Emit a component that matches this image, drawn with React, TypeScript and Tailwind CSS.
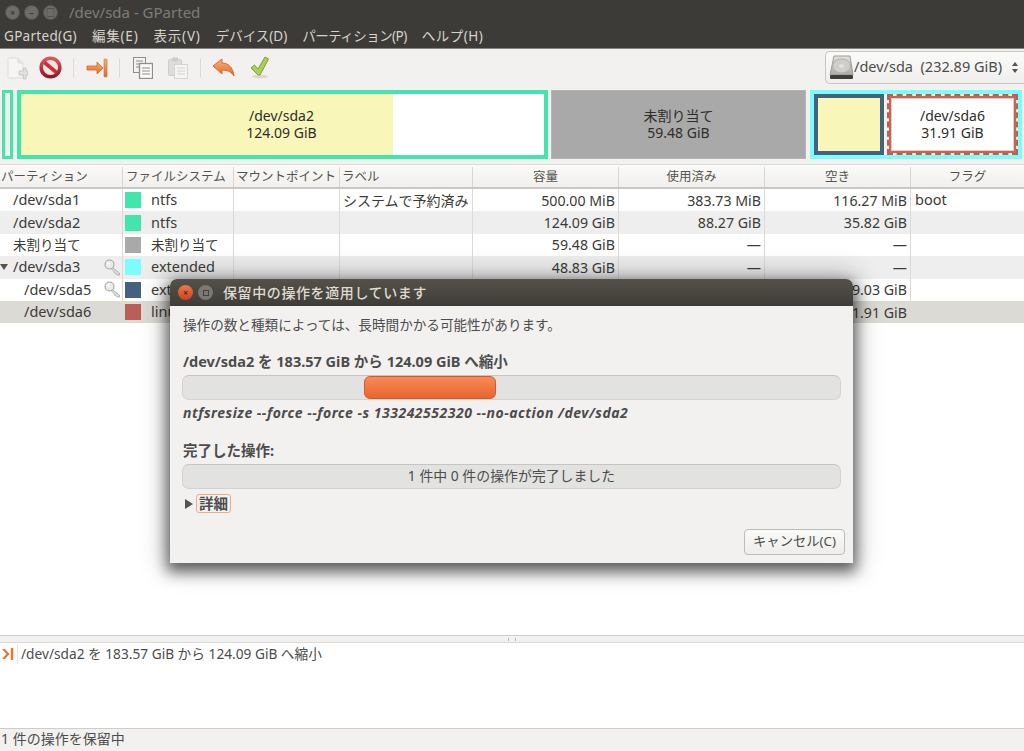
import React from 'react';

const font = "font-['Noto_Sans','Noto_Sans_CJK_JP',sans-serif]";

const columns = 'grid grid-cols-[123px_111px_106px_133px_146px_146px_146px_113px]';

const rows = [
  { name: '/dev/sda1', indent: 'pl-[13px]', color: 'bg-[#42e5ac]', fs: 'ntfs', label: 'システムで予約済み', size: '500.00 MiB', used: '383.73 MiB', free: '116.27 MiB', flag: 'boot', bg: 'bg-white' },
  { name: '/dev/sda2', indent: 'pl-[13px]', color: 'bg-[#42e5ac]', fs: 'ntfs', label: '', size: '124.09 GiB', used: '88.27 GiB', free: '35.82 GiB', flag: '', bg: 'bg-[#eeeeee]' },
  { name: '未割り当て', indent: 'pl-[13px] text-[13.5px]', color: 'bg-[#a9a9a9]', fs: '未割り当て', label: '', size: '59.48 GiB', used: '—', free: '—', flag: '', bg: 'bg-white', cjk: true },
  { name: '/dev/sda3', indent: 'pl-[13px]', color: 'bg-[#7dfcfe]', fs: 'extended', label: '', size: '48.83 GiB', used: '—', free: '—', flag: '', bg: 'bg-[#eeeeee]', arrow: true, key: true },
  { name: '/dev/sda5', indent: 'pl-[24px]', color: 'bg-[#44617f]', fs: 'ext4', label: '', size: '16.92 GiB', used: '7.89 GiB', free: '9.03 GiB', flag: '', bg: 'bg-white', key: true },
  { name: '/dev/sda6', indent: 'pl-[24px]', color: 'bg-[#ba5f57]', fs: 'linux-swap', label: '', size: '31.91 GiB', used: '—', free: '31.91 GiB', flag: '', bg: 'bg-[#dcdad5]' },
];

function WinButton({ glyph }: { glyph: string }) {
  return (
    <div className="w-[15px] h-[15px] rounded-full bg-[#6e6c66] border border-[#55534e] flex items-center justify-center text-[9px] leading-none text-[#3c3b37] font-bold">
      {glyph}
    </div>
  );
}

function NewIcon() {
  return (
    <svg width="21" height="23" viewBox="0 0 21 23">
      <path d="M1 1h10l5 5v15H1z" fill="#f6f5f3" stroke="#dddbd7" />
      <path d="M11 1v5h5" fill="#e8e6e2" stroke="#dddbd7" />
      <path d="M14 14h2.500v-3h2.500v3h1.500v4H19v4h-2.500v-4H12v-4z" fill="#e2e0dc" stroke="#cbc9c5" />
    </svg>
  );
}

function StopIcon() {
  return (
    <svg width="23" height="23" viewBox="0 0 23 23">
      <defs>
        <linearGradient id="stopRing" x1="0" y1="0" x2="0" y2="1">
          <stop offset="0" stopColor="#e0565c" />
          <stop offset="1" stopColor="#8e1a24" />
        </linearGradient>
      </defs>
      <circle cx="11.500" cy="11.500" r="9.300" fill="#f3e3e3" stroke="url(#stopRing)" strokeWidth="3.600" />
      <path d="M5.500 6.500l12 10" stroke="#c9323c" strokeWidth="3.600" />
    </svg>
  );
}

function ApplyArrow() {
  return (
    <svg width="22" height="20" viewBox="0 0 22 20">
      <defs>
        <linearGradient id="applyFill" x1="0" y1="0" x2="0" y2="1">
          <stop offset="0" stopColor="#f8b070" />
          <stop offset="1" stopColor="#e26a28" />
        </linearGradient>
      </defs>
      <path d="M1 8h10V4l6 6-6 6v-4H1z" fill="url(#applyFill)" stroke="#d9642a" strokeWidth="0.800" strokeLinejoin="round" />
      <rect x="18" y="1" width="3" height="18" rx="1" fill="url(#applyFill)" stroke="#d9642a" strokeWidth="0.600" />
    </svg>
  );
}

function CopyIcon() {
  const line = '#8f8e8a';
  return (
    <svg width="20" height="22" viewBox="0 0 20 22">
      <rect x="0.500" y="0.500" width="12" height="15" fill="#f3f2f0" stroke={line} />
      <path d="M3 4h7M3 7h7M3 10h7" stroke={line} />
      <rect x="6.500" y="6.500" width="13" height="15" fill="#fafaf9" stroke={line} strokeWidth="1.300" />
      <path d="M9 11h8M9 14h8M9 17h8" stroke={line} />
    </svg>
  );
}

function PasteIcon() {
  return (
    <svg width="20" height="22" viewBox="0 0 20 22">
      <rect x="0.500" y="2.500" width="13" height="16" rx="1" fill="#dedcd8" stroke="#cfcdc9" />
      <rect x="4" y="0.500" width="6" height="4" fill="#cfcdc9" />
      <rect x="6.500" y="7.500" width="13" height="14" fill="#f5f4f2" stroke="#d6d4d0" />
      <path d="M9 11h8M9 14h8M9 17h8" stroke="#d6d4d0" />
    </svg>
  );
}

function UndoIcon() {
  return (
    <svg width="23" height="19" viewBox="0 0 23 19">
      <defs>
        <linearGradient id="undoFill" x1="0" y1="0" x2="0" y2="1">
          <stop offset="0" stopColor="#f9b273" />
          <stop offset="1" stopColor="#e2692a" />
        </linearGradient>
      </defs>
      <path d="M1 8l9-7v4c6 0 11 4 12 13-3-4-6-6-12-6v4z" fill="url(#undoFill)" stroke="#d2602a" strokeWidth="0.900" strokeLinejoin="round" />
    </svg>
  );
}

function CheckIcon() {
  return (
    <svg width="20" height="23" viewBox="0 0 20 23">
      <ellipse cx="10" cy="20.500" rx="8" ry="1.800" fill="#d9d8d4" />
      <path d="M1 12l3.500-3 3.500 4L15 1l3.500 2-8.500 16H8z" fill="#a9cf54" stroke="#7fa034" strokeLinejoin="round" />
    </svg>
  );
}

function KeyIcon() {
  return (
    <svg width="17" height="17" viewBox="0 0 17 17" className="shrink-0 mr-[1px]">
      <path d="M8.500 8.500l7 5.500v2h-2.500l-1-1.500-1.500-.5-.5-1.500-3-3z" fill="#dfdedb" stroke="#a5a4a0" strokeWidth="0.800" />
      <circle cx="5.500" cy="5.500" r="4.500" fill="#ecebe9" stroke="#a5a4a0" strokeWidth="1.100" />
      <circle cx="4.500" cy="4.500" r="1.300" fill="#fafaf9" />
    </svg>
  );
}

function DiskIcon() {
  return (
    <svg width="25" height="25" viewBox="0 0 25 25" className="shrink-0">
      <defs>
        <linearGradient id="diskFace" x1="0" y1="0" x2="0" y2="1">
          <stop offset="0" stopColor="#e3e2df" />
          <stop offset="1" stopColor="#aaa9a5" />
        </linearGradient>
      </defs>
      <path d="M5 1h16l3 19H1z" fill="url(#diskFace)" stroke="#9e9d99" />
      <ellipse cx="12.500" cy="11" rx="9" ry="7" fill="#cfcecb" stroke="#b0afab" />
      <ellipse cx="12.500" cy="11" rx="2.500" ry="1.800" fill="#e6e5e2" />
      <rect x="1" y="20" width="23" height="4" rx="1" fill="#3f3e3b" />
    </svg>
  );
}

function TableRow({ row }: { row: (typeof rows)[number] }) {
  const cell = 'border-r border-[#dcdad7] h-full flex items-center overflow-hidden whitespace-nowrap';
  return (
    <div className={`${columns} h-[22.4px] text-[14.5px] text-[#3c3b37] ${row.bg}`}>
      <div className={`${cell} relative ${row.indent}`}>
        {row.arrow && <span className="absolute left-0 top-[8px] w-0 h-0 border-l-[4px] border-r-[4px] border-t-[6px] border-l-transparent border-r-transparent border-t-[#55534e]" />}
        <span className="grow">{row.name}</span>
        {row.key && <KeyIcon />}
      </div>
      <div className={`${cell} pl-[2px]`}>
        <span className={`w-4 h-4 shrink-0 ${row.color}`} />
        <span className={`ml-[10px] ${row.cjk ? 'text-[13.5px]' : ''}`}>{row.fs}</span>
      </div>
      <div className={cell} />
      <div className={`${cell} pl-[3px] text-[14px]`}>{row.label}</div>
      <div className={`${cell} justify-end pr-[3px] text-[14.200px]`}>{row.size}</div>
      <div className={`${cell} justify-end pr-[3px] text-[14.200px]`}>{row.used}</div>
      <div className={`${cell} justify-end pr-[3px] text-[14.200px]`}>{row.free}</div>
      <div className="h-full flex items-center pl-[4px]">{row.flag}</div>
    </div>
  );
}

function PendingDialog() {
  return (
    <div className="absolute left-[170px] top-[279px] w-[683px] h-[284px] rounded-t-[7px] bg-[#f2f1f0] shadow-[0_6px_14px_3px_rgba(0,0,0,0.55),0_0_26px_6px_rgba(0,0,0,0.22)] flex flex-col">
      <div className="h-[27px] shrink-0 rounded-t-[7px] bg-gradient-to-b from-[#545149] to-[#3f3d38] flex items-center pl-[8px]">
        <div className="w-[15px] h-[15px] rounded-full bg-gradient-to-b from-[#f0764a] to-[#c9431f] flex items-center justify-center text-[9px] leading-none text-[#5a2413] font-bold">×</div>
        <div className="ml-[5px] w-[15px] h-[15px] rounded-full bg-[#7b7972] flex items-center justify-center">
          <span className="w-[6px] h-[6px] border border-[#45433e]" />
        </div>
        <span className="ml-[10px] text-[14px] font-medium text-[#dfdbd2] tracking-[0.6px]">保留中の操作を適用しています</span>
      </div>
      <div className="flex flex-col grow pl-[13px] pr-[12px] text-[#4c4c4c]">
        <p className="mt-[10px] text-[13.6px] leading-[18px]">操作の数と種類によっては、長時間かかる可能性があります。</p>
        <p className="mt-[18px] text-[14.5px] leading-[18px] font-bold">/dev/sda2 を 183.57 GiB から 124.09 GiB へ縮小</p>
        <div className="-ml-[1px] mt-[5px] h-[25px] rounded-[7px] bg-[#e2e2e0] border border-[#d4d3d0] border-t-[#c6c5c1] pl-[181px]">
          <div className="h-full w-[132px] rounded-[6px] bg-gradient-to-b from-[#f98a56] to-[#e8662c] border border-[#cf5c2a]" />
        </div>
        <p className="mt-[4px] text-[14px] tracking-[0.5px] leading-[18px] font-bold italic">ntfsresize --force --force -s 133242552320 --no-action /dev/sda2</p>
        <p className="mt-[19px] text-[14.5px] leading-[18px] font-bold">完了した操作:</p>
        <div className="-ml-[1px] mt-[5px] h-[25px] rounded-[7px] bg-[#e2e2e0] border border-[#d4d3d0] border-t-[#c6c5c1] flex items-center justify-center text-[13.9px]">
          1 件中 0 件の操作が完了しました
        </div>
        <div className="mt-[5px] flex items-center">
          <span className="ml-[2px] w-0 h-0 border-t-[5px] border-b-[5px] border-l-[8px] border-t-transparent border-b-transparent border-l-[#55534e]" />
          <span className="ml-[3px] px-[2px] h-[19px] leading-[17px] rounded-[3px] border border-[#f5a98a] text-[14.5px] font-bold">詳細</span>
        </div>
        <div className="mt-auto mb-[8px] flex justify-end">
          <button className="h-[26px] w-[101px] -mr-[4px] rounded-[4px] border border-[#bdbcb8] bg-gradient-to-b from-[#fafaf9] to-[#eeedeb] text-[13.3px] text-[#4c4c4c]">
            キャンセル(C)
          </button>
        </div>
      </div>
    </div>
  );
}

export default function App() {
  return (
    <div className={`${font} relative w-[1024px] h-[751px] overflow-hidden bg-white flex flex-col text-[#3c3b37]`}>
      <div className="h-[24px] shrink-0 bg-[#3d3b37] flex items-center pl-[5px]">
        <div className="flex gap-[4px]">
          <WinButton glyph="×" />
          <WinButton glyph="–" />
          <WinButton glyph="□" />
        </div>
        <span className="ml-[11px] text-[15px] text-[#7f7d77]">/dev/sda - GParted</span>
      </div>

      <div className="h-[25px] shrink-0 bg-[#3c3b37] border-b border-[#85837d] flex items-center pl-[4px] pt-[1px] gap-[15px] text-[13.5px] text-[#d7d3ca] whitespace-nowrap">
        <span className="tracking-[0.3px]">GParted(G)</span>
        <span className="tracking-[0.8px]">編集(E)</span>
        <span className="tracking-[0.8px]">表示(V)</span>
        <span>デバイス(D)</span>
        <span className="tracking-[-0.55px]">パーティション(P)</span>
        <span className="tracking-[0.5px]">ヘルプ(H)</span>
      </div>

      <div className="h-[38px] shrink-0 bg-[#f2f1f0] flex items-center pl-[7px] pb-[1px]">
        <div className="w-[21px] mt-[2px]"><NewIcon /></div>
        <div className="ml-[11px] w-[23px]"><StopIcon /></div>
        <div className="ml-[11px] w-px h-[20px] bg-[#dcdbd8]" />
        <div className="ml-[12px] w-[22px]"><ApplyArrow /></div>
        <div className="ml-[11px] w-px h-[20px] bg-[#dcdbd8]" />
        <div className="ml-[13px] w-[20px]"><CopyIcon /></div>
        <div className="ml-[15px] w-[20px]"><PasteIcon /></div>
        <div className="ml-[12px] w-px h-[20px] bg-[#dcdbd8]" />
        <div className="ml-[11px] w-[23px]"><UndoIcon /></div>
        <div className="ml-[15px] w-[20px]"><CheckIcon /></div>
        <div className="ml-auto w-[199px] h-[33px] -mt-[1px] rounded-l-[5px] border border-r-0 border-[#c6c5c1] bg-gradient-to-b from-[#fbfbfa] to-[#efeeec] flex items-center pl-[3px] text-[14.5px] text-[#4c4c4c] whitespace-pre">
          <DiskIcon />
          <span>/dev/sda  (232.89 GiB)</span>
          <span className="ml-auto mr-[6px] flex flex-col gap-[3px]">
            <span className="w-0 h-0 border-l-[3px] border-r-[3px] border-b-[4px] border-l-transparent border-r-transparent border-b-[#55534e]" />
            <span className="w-0 h-0 border-l-[3px] border-r-[3px] border-t-[4px] border-l-transparent border-r-transparent border-t-[#55534e]" />
          </span>
        </div>
      </div>

      <div className="h-[77px] shrink-0 bg-[#f2f1f0] flex pl-[2px] pt-[3px] pb-[5px] text-[14px] leading-[17px] text-[#2e2d2a]">
        <div className="w-[11px] border-[3px] border-[#42e5ac] bg-[#f2f1f0]" />
        <div className="ml-[4px] w-[531px] border-[4px] border-[#42e5ac] flex relative bg-white">
          <div className="w-[372px] bg-[#f8f7b9]" />
          <div className="absolute inset-0 flex flex-col items-center justify-center pr-[2px] pb-[2px]">
            <span>/dev/sda2</span>
            <span>124.09 GiB</span>
          </div>
        </div>
        <div className="ml-[3px] w-[255px] border border-[#b5b5b5] bg-[#a9a9a9] flex flex-col items-center justify-center pb-[2px]">
          <span>未割り当て</span>
          <span>59.48 GiB</span>
        </div>
        <div className="ml-[4px] w-[212px] border-[4px] border-[#7dfcfe] flex gap-[3px] bg-[#f2f1f0]">
          <div className="w-[70px] border-[4px] border-[#44617f] bg-[#f8f7b9]" />
          <div className="grow border-[2px] border-dashed border-[#ba5f57] bg-[#f8f7b9] flex">
            <div className="grow border-[2px] border-[#c0665e] flex">
              <div className="grow border border-[#eec9bf] bg-white flex flex-col items-center justify-center pb-[2px]">
                <span>/dev/sda6</span>
                <span>31.91 GiB</span>
              </div>
            </div>
          </div>
        </div>
      </div>

      <div className={`${columns} h-[25px] shrink-0 pt-[2px] text-[12.5px] whitespace-nowrap text-[#55534e] bg-gradient-to-b from-[#fafaf9] to-[#f1f0ee] border-t border-b-2 border-t-[#dcdbd8] border-b-[#c9c7c3]`}>
        <div className="border-r border-[#d8d6d2] flex items-center pl-[1px]">パーティション</div>
        <div className="border-r border-[#d8d6d2] flex items-center pl-[3px]">ファイルシステム</div>
        <div className="border-r border-[#d8d6d2] flex items-center pl-[2px]">マウントポイント</div>
        <div className="border-r border-[#d8d6d2] flex items-center pl-[2px]">ラベル</div>
        <div className="border-r border-[#d8d6d2] flex items-center justify-center">容量</div>
        <div className="border-r border-[#d8d6d2] flex items-center justify-center">使用済み</div>
        <div className="border-r border-[#d8d6d2] flex items-center justify-center">空き</div>
        <div className="flex items-center justify-center">フラグ</div>
      </div>

      <div className="grow bg-white">
        {rows.map((row) => (
          <TableRow key={row.name} row={row} />
        ))}
      </div>

      <div className="h-[7px] shrink-0 bg-[#f2f1f0] border-t border-[#cfcdc9] flex items-center justify-center">
        <span className="w-[8px] h-[3px] border-x border-[#bdbbb7]" />
      </div>

      <div className="h-[86px] shrink-0 bg-white border-t border-[#dcdbd8]">
        <div className="h-[22px] flex items-center text-[13.7px] text-[#4c4c4c]">
          <svg width="15" height="16" viewBox="0 0 15 16" className="ml-[1px]">
            <path d="M1 3h3l4.500 5-4.500 5H1l4.500-5z" fill="#e8762f" />
            <path d="M11 2v12" stroke="#e8762f" strokeWidth="2.400" />
          </svg>
          <span className="ml-[1px] pl-[3px] border-l border-[#e6e5e3]">/dev/sda2 を 183.57 GiB から 124.09 GiB へ縮小</span>
        </div>
      </div>

      <div className="h-[23px] shrink-0 bg-[#f2f1f0] border-t border-[#cfcdc9] flex items-center pl-[1px] pb-[3px] text-[14px] text-[#4c4c4c]">
        1 件の操作を保留中
      </div>

      <PendingDialog />
    </div>
  );
}
